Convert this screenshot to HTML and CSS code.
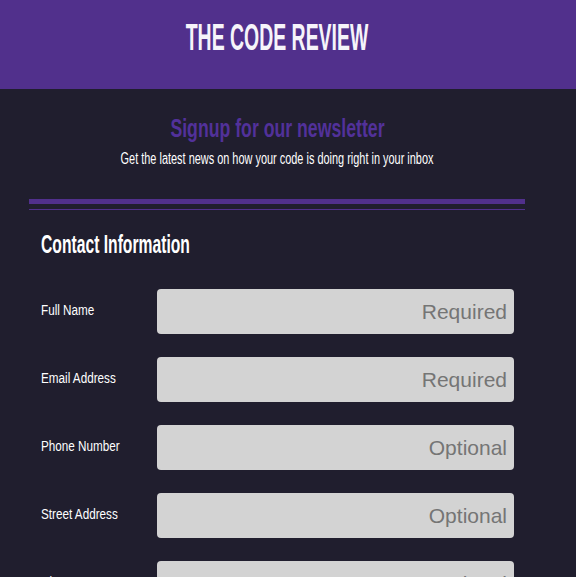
FILE: index.html
```html
<!DOCTYPE html>
<html lang="en">
<head>
<meta charset="utf-8">
<title>The Code Review</title>
<link rel="stylesheet" href="styles.css">
</head>
<body>
<header class="site-header">
  <div class="wrap">
    <h1 class="brand"><span class="squeeze">THE CODE REVIEW</span></h1>
  </div>
</header>
<main class="wrap">
  <section class="intro">
    <h2 class="intro-title"><span class="squeeze">Signup for our newsletter</span></h2>
    <p class="intro-text"><span class="squeeze">Get the latest news on how your code is doing right in your inbox</span></p>
  </section>
  <div class="rule"></div>
  <form class="form">
    <h3 class="form-title"><span class="squeeze">Contact Information</span></h3>
    <div class="field">
      <label class="field-label" for="f-name"><span class="squeeze">Full Name</span></label>
      <input class="field-input" id="f-name" type="text" placeholder="Required">
    </div>
    <div class="field">
      <label class="field-label" for="f-email"><span class="squeeze">Email Address</span></label>
      <input class="field-input" id="f-email" type="email" placeholder="Required">
    </div>
    <div class="field">
      <label class="field-label" for="f-phone"><span class="squeeze">Phone Number</span></label>
      <input class="field-input" id="f-phone" type="tel" placeholder="Optional">
    </div>
    <div class="field">
      <label class="field-label" for="f-street"><span class="squeeze">Street Address</span></label>
      <input class="field-input" id="f-street" type="text" placeholder="Optional">
    </div>
    <div class="field">
      <label class="field-label" for="f-city"><span class="squeeze">City</span></label>
      <input class="field-input" id="f-city" type="text" placeholder="Optional">
    </div>
  </form>
</main>
</body>
</html>
```
FILE: styles.css
```css
html, body {
  margin: 0;
  padding: 0;
  overflow: hidden;
}
body {
  background: #201e2e;
  color: #ffffff;
  font-family: "Liberation Sans", Arial, sans-serif;
}
.wrap {
  width: 496px;
  margin-left: 29px;
}
.squeeze {
  display: inline-block;
  white-space: nowrap;
}
.site-header {
  box-sizing: border-box;
  height: 89px;
  padding-top: 20px;
  background: #51308c;
}
.brand {
  margin: 0;
  text-align: center;
  font-size: 36px;
  line-height: 36px;
  font-weight: 700;
  color: #f6f4fa;
}
.brand .squeeze { transform: scaleX(0.54); }
.intro { text-align: center; }
.intro-title {
  margin: 24px 0 0;
  font-size: 26px;
  line-height: 30px;
  font-weight: 700;
  color: #52319a;
}
.intro-title .squeeze { transform: scaleX(0.68); }
.intro-text {
  margin: 7px 0 0;
  font-size: 16px;
  line-height: 18px;
}
.intro-text .squeeze { transform: scaleX(0.683); }
.rule {
  margin-top: 31px;
  height: 5px;
  border-top: 5px solid #51308c;
  border-bottom: 1px solid #51308c;
}
.form {
  padding: 0 11px 0 12px;
}
.form-title {
  margin: 19px 0 30px;
  font-size: 26px;
  line-height: 30px;
  font-weight: 700;
}
.form-title .squeeze {
  transform: scaleX(0.603);
  transform-origin: left center;
}
.field {
  display: flex;
  margin-bottom: 23px;
}
.field-label {
  width: 116px;
  flex: none;
  padding-top: 12px;
  font-size: 15.5px;
  line-height: 18px;
}
.field-label .squeeze {
  transform: scaleX(0.755);
  transform-origin: left center;
}
.field-input {
  box-sizing: border-box;
  width: 357px;
  height: 45px;
  margin: 0;
  padding: 0 7px;
  border: none;
  border-radius: 4px;
  background: #d3d3d3;
  text-align: right;
  font-family: "Liberation Sans", Arial, sans-serif;
  font-size: 21px;
  color: #333;
}
.field-input::placeholder {
  color: #757575;
  opacity: 1;
}
```
